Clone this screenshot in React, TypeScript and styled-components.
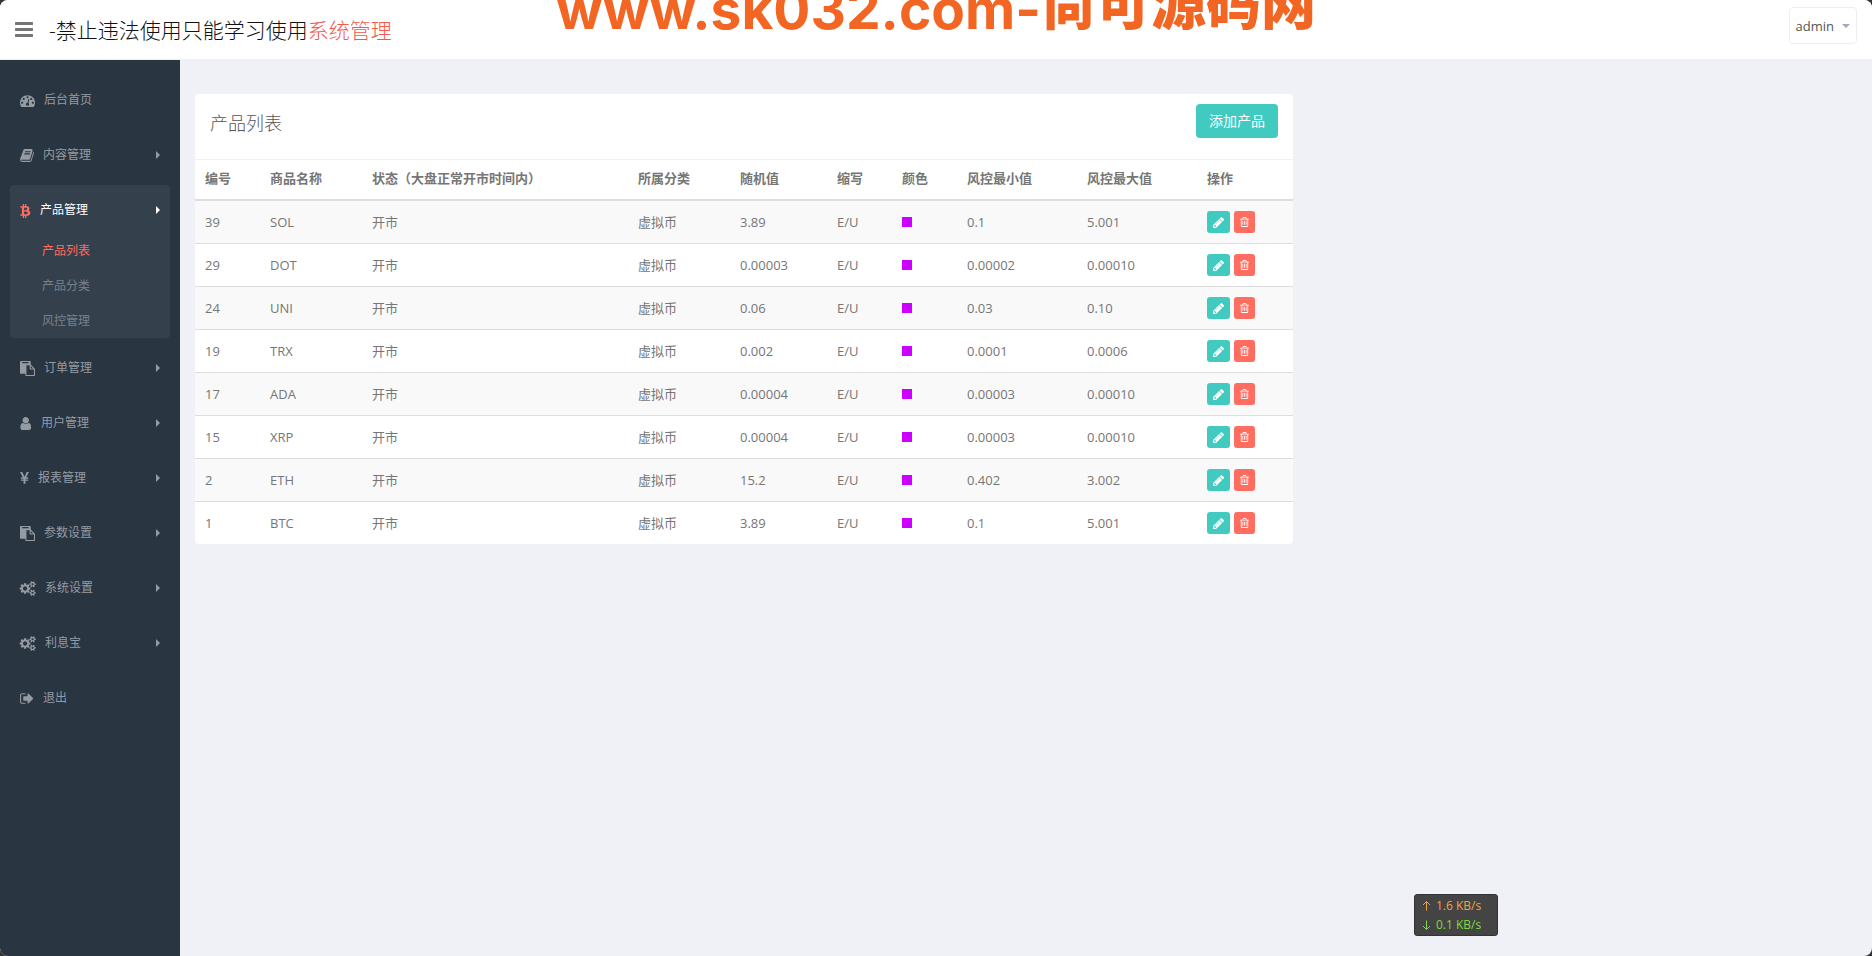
import React from 'react';
import styled, { createGlobalStyle, css } from 'styled-components';

const Global = createGlobalStyle`
  *, *::before, *::after { box-sizing: border-box; }
  html { background: #333; }
  body {
    margin: 0;
    color: #767676;
    font: 400 13px/20px "Open Sans", "Noto Sans CJK SC", sans-serif;
  }
  button { font: inherit; cursor: pointer; border: 0; padding: 0; }
  a { color: inherit; text-decoration: none; }
  ul { list-style: none; margin: 0; padding: 0; }
`;

/* Icon outlines on a 1792-unit grid: [left edge, width, path] */
const glyphs = {
  bars: [128, 1536, 'M1664 1344v128q0 26-19 45t-45 19h-1408q-26 0-45-19t-19-45v-128q0-26 19-45t45-19h1408q26 0 45 19t19 45zm0-512v128q0 26-19 45t-45 19h-1408q-26 0-45-19t-19-45v-128q0-26 19-45t45-19h1408q26 0 45 19t19 45zm0-512v128q0 26-19 45t-45 19h-1408q-26 0-45-19t-19-45v-128q0-26 19-45t45-19h1408q26 0 45 19t19 45z'],
  dashboard: [0, 1792, 'M384 1152q0-53-37.5-90.5t-90.5-37.5-90.5 37.5-37.5 90.5 37.5 90.5 90.5 37.5 90.5-37.5 37.5-90.5zm192-448q0-53-37.5-90.5t-90.5-37.5-90.5 37.5-37.5 90.5 37.5 90.5 90.5 37.5 90.5-37.5 37.5-90.5zm428 481l101-382q6-26-7.5-48.5t-38.5-29.5-48 6.5-30 39.5l-101 382q-60 5-107 43.5t-63 98.5q-20 77 20 146t117 89 146-20 89-117q16-60-6-117t-72-91zm660-33q0-53-37.5-90.5t-90.5-37.5-90.5 37.5-37.5 90.5 37.5 90.5 90.5 37.5 90.5-37.5 37.5-90.5zm-640-640q0-53-37.5-90.5t-90.5-37.5-90.5 37.5-37.5 90.5 37.5 90.5 90.5 37.5 90.5-37.5 37.5-90.5zm448 192q0-53-37.5-90.5t-90.5-37.5-90.5 37.5-37.5 90.5 37.5 90.5 90.5 37.5 90.5-37.5 37.5-90.5zm320 448q0 261-141 483-19 29-54 29h-1402q-35 0-54-29-141-221-141-483 0-182 71-348t191-286 286-191 348-71 348 71 286 191 191 286 71 348z'],
  book: [64, 1664, 'M1703 478q40 57 18 129l-275 906q-19 64-76.5 107.5t-122.5 43.5h-923q-77 0-148.5-53.5t-99.5-131.5q-24-67-2-127 0-4 3-27t4-37q1-8-3-21.5t-3-19.5q2-11 8-21t16.5-23.5 16.5-23.5q23-38 45-91.5t30-91.5q3-10 .5-30t-.5-28q3-11 17-28t17-23q21-36 42-92t25-90q1-9-2.5-32t.5-28q4-13 22-30.5t22-22.5q19-26 42.5-84.5t27.5-96.5q1-8-3-25.5t-2-26.5q2-8 9-18t18-23 17-21q8-12 16.5-30.5t15-35 16-36 19.5-32 26.5-23.5 36-11.5 47.5 5.5l-1 3q38-9 51-9h761q74 0 114 56t18 130l-274 906q-36 119-71.5 153.5t-128.5 34.5h-869q-27 0-38 15-11 16-1 43 24 70 144 70h923q29 0 56-15.5t35-41.5l300-987q7-22 5-57 38 15 59 43zm-1064 2q-4 13 2 22.5t20 9.5h608q13 0 25.5-9.5t16.5-22.5l21-64q4-13-2-22.5t-20-9.5h-608q-13 0-25.5 9.5t-16.5 22.5zm-83 256q-4 13 2 22.5t20 9.5h608q13 0 25.5-9.5t16.5-22.5l21-64q4-13-2-22.5t-20-9.5h-608q-13 0-25.5 9.5t-16.5 22.5z'],
  bitcoin: [57, 1260, 'M1167.5 640q18 182-131 258 117 28 175 103t45 214q-7 71-32.5 125t-64.5 89-97 58.5-121.5 34.5-145.5 15v255h-154v-251q-80 0-122-1v252h-154v-255q-18 0-54-.5t-55-.5h-200l31-183h111q50 0 58-51v-402h16q-6-1-16-1v-287q-13-68-89-68h-111v-164l212 1q64 0 97-1v-252h154v247q82-2 122-2v-245h154v252q79 7 140 22.5t113 45 82.5 78 36.5 114.5zm-215 545q0-36-15-64t-37-46-57.5-30.5-65.5-18.5-74-9-69-3-64.5 1-47.5 1v338q8 0 37 .5t48 .5 53-1.5 58.5-4 57-8.5 55.5-14 47.5-21 39.5-30 24.5-40 9.5-51zm-71-476q0-33-12.5-58.5t-30.5-42-48-28-55-16.5-61.5-8-58-2.5-54 1-39.5.5v307q5 0 34.5.5t46.5 0 50-2 55-5.5 51.5-11 48.5-18.5 37-27 27-38.5 9-51z'],
  paste: [0, 1792, 'M768 1664h896v-640h-416q-40 0-68-28t-28-68v-416h-384v1152zm256-1440v-64q0-13-9.5-22.5t-22.5-9.5h-704q-13 0-22.5 9.5t-9.5 22.5v64q0 13 9.5 22.5t22.5 9.5h704q13 0 22.5-9.5t9.5-22.5zm256 672h299l-299-299v299zm512 128v672q0 40-28 68t-68 28h-960q-40 0-68-28t-28-68v-160h-544q-40 0-68-28t-28-68v-1344q0-40 28-68t68-28h1088q40 0 68 28t28 68v328q21 13 36 28l408 408q28 28 48 76t20 88z'],
  user: [224, 1408, 'M1536 1399q0 109-62.5 187t-150.5 78h-854q-88 0-150.5-78t-62.5-187q0-85 8.5-160.5t31.5-152 58.5-131 94-89 134.5-34.5q131 128 313 128t313-128q76 0 134.5 34.5t94 89 58.5 131 31.5 152 8.5 160.5zm-256-887q0 159-112.5 271.5t-271.5 112.5-271.5-112.5-112.5-271.5 112.5-271.5 271.5-112.5 271.5 112.5 112.5 271.5z'],
  yen: [384, 1027, 'M985.5 1536h-172q-13 0-22.5-9t-9.5-23v-330h-288q-13 0-22.5-9t-9.5-23v-103q0-13 9.5-22.5t22.5-9.5h288v-85h-288q-13 0-22.5-9t-9.5-23v-104q0-13 9.5-22.5t22.5-9.5h214l-321-578q-8-16 0-32 10-16 28-16h194q19 0 29 18l215 425q19 38 56 125 10-24 30.5-68t27.5-61l191-420q8-19 29-19h191q17 0 27 16 9 14 1 31l-313 579h215q13 0 22.5 9.5t9.5 22.5v104q0 14-9.5 23t-22.5 9h-290v85h290q13 0 22.5 9.5t9.5 22.5v103q0 14-9.5 23t-22.5 9h-290v330q0 13-9.5 22.5t-22.5 9.5z'],
  cogs: [0, 1856, 'M832 896q0-106-75-181t-181-75-181 75-75 181 75 181 181 75 181-75 75-181zm768 512q0-52-38-90t-90-38-90 38-38 90q0 53 37.5 90.5t90.5 37.5 90.5-37.5 37.5-90.5zm0-1024q0-52-38-90t-90-38-90 38-38 90q0 53 37.5 90.5t90.5 37.5 90.5-37.5 37.5-90.5zm-384 421v185q0 10-7 19.5t-16 10.5l-155 24q-11 35-32 76 34 48 90 115 7 11 7 20 0 12-7 19-23 30-82.5 89.5t-78.5 59.5q-11 0-21-7l-115-90q-37 19-77 31-11 108-23 155-7 24-30 24h-186q-11 0-20-7.5t-10-17.5l-23-153q-34-10-75-31l-118 89q-7 7-20 7-11 0-21-8-144-133-144-160 0-9 7-19 10-14 41-53t47-61q-23-44-35-82l-152-24q-10-1-17-9.5t-7-19.5v-185q0-10 7-19.5t16-10.5l155-24q11-35 32-76-34-48-90-115-7-11-7-20 0-12 7-20 22-30 82-89t79-59q11 0 21 7l115 90q34-18 77-32 11-108 23-154 7-24 30-24h186q11 0 20 7.5t10 17.5l23 153q34 10 75 31l118-89q8-7 20-7 11 0 21 8 144 133 144 160 0 8-7 19-12 16-42 54t-45 60q23 48 34 82l152 23q10 2 17 10.5t7 19.5zm640 533v140q0 16-149 31-12 27-30 52 51 113 51 138 0 4-4 7-122 71-124 71-8 0-46-47t-52-68q-20 2-30 2t-30-2q-14 21-52 68t-46 47q-2 0-124-71-4-3-4-7 0-25 51-138-18-25-30-52-149-15-149-31v-140q0-16 149-31 13-29 30-52-51-113-51-138 0-4 4-7 4-2 35-20t59-34 30-16q8 0 46 46.5t52 67.5q20-2 30-2t30 2q51-71 92-112l6-2q4 0 124 70 4 3 4 7 0 25-51 138 17 23 30 52 149 15 149 31zm0-1024v140q0 16-149 31-12 27-30 52 51 113 51 138 0 4-4 7-122 71-124 71-8 0-46-47t-52-68q-20 2-30 2t-30-2q-14 21-52 68t-46 47q-2 0-124-71-4-3-4-7 0-25 51-138-18-25-30-52-149-15-149-31v-140q0-16 149-31 13-29 30-52-51-113-51-138 0-4 4-7 4-2 35-20t59-34 30-16q8 0 46 46.5t52 67.5q20-2 30-2t30 2q51-71 92-112l6-2q4 0 124 70 4 3 4 7 0 25-51 138 17 23 30 52 149 15 149 31z'],
  signOut: [64, 1664, 'M704 1440q0 4 1 20t.5 26.5-3 23.5-10 19.5-20.5 6.5h-320q-119 0-203.5-84.5t-84.5-203.5v-704q0-119 84.5-203.5t203.5-84.5h320q13 0 22.5 9.5t9.5 22.5q0 4 1 20t.5 26.5-3 23.5-10 19.5-20.5 6.5h-320q-66 0-113 47t-47 113v704q0 66 47 113t113 47h312l11.5 1 11.5 3 8 5.5 7 9 2 13.5zm928-544q0 26-19 45l-544 544q-19 19-45 19t-45-19-19-45v-288h-448q-26 0-45-19t-19-45v-384q0-26 19-45t45-19h448v-288q0-26 19-45t45-19 45 19l544 544q19 19 19 45z'],
  pencil: [256, 1387, 'M491 1536l91-91-235-235-91 91v107h128v128h107zm523-928q0-22-22-22-10 0-17 7l-542 542q-7 7-7 17 0 22 22 22 10 0 17-7l542-542q7-7 7-17zm-54-192l416 416-832 832h-416v-416zm683 96q0 53-37 90l-166 166-416-416 166-165q36-38 90-38 53 0 91 38l235 234q37 39 37 91z'],
  trash: [192, 1408, 'M704 736v576q0 14-9 23t-23 9h-64q-14 0-23-9t-9-23v-576q0-14 9-23t23-9h64q14 0 23 9t9 23zm256 0v576q0 14-9 23t-23 9h-64q-14 0-23-9t-9-23v-576q0-14 9-23t23-9h64q14 0 23 9t9 23zm256 0v576q0 14-9 23t-23 9h-64q-14 0-23-9t-9-23v-576q0-14 9-23t23-9h64q14 0 23 9t9 23zm128 724v-948h-896v948q0 22 7 40.5t14.5 27 10.5 8.5h832q3 0 10.5-8.5t14.5-27 7-40.5zm-672-1076h448l-48-117q-7-9-17-11h-317q-10 2-17 11zm928 32v64q0 14-9 23t-23 9h-96v948q0 83-47 143.5t-113 60.5h-832q-66 0-113-58.5t-47-141.5v-952h-96q-14 0-23-9t-9-23v-64q0-14 9-23t23-9h309l70-167q15-37 54-63t79-26h320q40 0 79 26t54 63l70 167h309q14 0 23 9t9 23z'],
} as const;

type GlyphName = keyof typeof glyphs;

function Glyph({ name, size }: { name: GlyphName; size: number }) {
  const [left, width, d] = glyphs[name];
  return (
    <svg
      viewBox={`${left} 0 ${width} 1792`}
      width={Math.round((width / 1792) * size)}
      height={size}
      fill="currentColor"
      overflow="visible"
      aria-hidden="true"
    >
      <path d={d} />
    </svg>
  );
}

const Page = styled.div`
  position: relative;
  min-height: 100vh;
  display: flex;
  flex-direction: column;
  overflow: hidden;
  border-radius: 8px;
  background: #f0f1f7;
`;

const Header = styled.header`
  height: 60px;
  flex: none;
  display: flex;
  align-items: center;
  padding: 0 15px;
  background: #fff;
  border-bottom: 1px solid #f0f0f3;
`;

const MenuToggle = styled.button`
  display: flex;
  background: none;
  color: #757575;
`;

const Brand = styled.a`
  margin-left: 16px;
  font-size: 21px;
  line-height: 30px;
  font-weight: 300;
  color: #111;
  span { color: #f4574b; }
`;

const UserButton = styled.button`
  margin: 0 0 8px auto;
  height: 37px;
  padding: 0 6px;
  display: flex;
  align-items: center;
  gap: 8px;
  background: #fff;
  border: 1px solid #edeef3;
  border-radius: 4px;
  color: #555;
  &::after {
    content: '';
    border: 4px solid transparent;
    border-top-color: #a4aabb;
    border-bottom: 0;
  }
`;

const Banner = styled.div`
  position: absolute;
  top: 0;
  left: 0;
  right: 0;
  height: 30px;
  display: flex;
  justify-content: center;
  align-items: flex-end;
  pointer-events: none;
  color: #f26522;
  font: 700 55px/42px "Inter", "Noto Sans CJK SC", sans-serif;
  white-space: nowrap;
  b { font-weight: 900; line-height: 52px; }
`;

const Body = styled.div`
  flex: 1;
  display: flex;
`;

const Sidebar = styled.nav`
  width: 180px;
  flex: none;
  padding: 15px 10px;
  background: #2a3542;
  font-size: 12px;
`;

const Group = styled.li<{ $open?: boolean }>`
  margin-bottom: 5px;
  border-radius: 4px;
  ${p => p.$open && css`background: #35404d;`}
`;

const Item = styled.a<{ $active?: boolean }>`
  height: 50px;
  padding: 0 10px;
  display: flex;
  align-items: center;
  gap: 9px;
  color: ${p => (p.$active ? '#fff' : '#949ba2')};
  svg { color: ${p => (p.$active ? '#ff6c60' : 'inherit')}; }
`;

const Arrow = styled.i`
  margin-left: auto;
  border: 4px solid transparent;
  border-left-color: currentColor;
  border-right: 0;
`;

const SubList = styled.ul`
  margin-top: -2px;
`;

const SubItem = styled.a<{ $active?: boolean }>`
  display: block;
  padding-left: 32px;
  line-height: 35px;
  color: ${p => (p.$active ? '#ff6c60' : '#77818a')};
`;

const Main = styled.main`
  flex: 1;
  padding: 34px 15px;
`;

const Card = styled.section`
  width: calc(66.6667% - 10px);
  background: #fff;
  border-radius: 4px;
  overflow: hidden;
`;

const CardHead = styled.header`
  height: 66px;
  padding: 10px 15px;
  display: flex;
  justify-content: space-between;
  border-bottom: 1px solid #eff1f4;
  h1 { margin: 0; font-size: 18px; line-height: 38px; font-weight: 300; color: #555; }
`;

const AddButton = styled.button`
  height: 34px;
  padding: 0 13px;
  border-radius: 4px;
  background: #41cac0;
  color: #fff;
  font-size: 14px;
`;

const Table = styled.table`
  width: 100%;
  table-layout: fixed;
  border-collapse: separate;
  border-spacing: 0;
  th { height: 41px; padding: 0 10px 3px; text-align: left; border-bottom: 2px solid #ddd; font-weight: 700; }
  td { height: 43px; padding: 0 10px; border-bottom: 1px solid #ddd; }
  tr:last-child td { height: 42px; border-bottom: 0; }
  tbody tr:nth-child(odd) { background: #f9f9f9; }
`;

const Swatch = styled.span`
  display: block;
  width: 10px;
  height: 10px;
  background: #c0f;
`;

const Actions = styled.div`
  display: flex;
  gap: 4px;
`;

const IconButton = styled.button<{ $danger?: boolean }>`
  width: ${p => (p.$danger ? 21 : 23)}px;
  height: 22px;
  display: flex;
  align-items: center;
  justify-content: center;
  border-radius: 3px;
  color: #fff;
  background: ${p => (p.$danger ? '#ff6c60' : '#41cac0')};
`;

const NetMeter = styled.aside`
  position: fixed;
  right: 374px;
  bottom: 20px;
  width: 84px;
  padding: 1px 7px;
  border: 1px solid #333;
  border-radius: 3px;
  background: #444;
  line-height: 19px;
  font-size: 12px;
`;

const Rate = styled.div<{ $color: string }>`
  display: flex;
  align-items: center;
  gap: 5px;
  color: ${p => p.$color};
`;

function RateArrow({ down }: { down?: boolean }) {
  return (
    <svg width="9" height="10" viewBox="0 0 9 10" fill="none" stroke="currentColor" aria-hidden="true">
      <path d={down ? 'M4.5 0.5v9M1 6l3.5 3.5L8 6' : 'M4.5 9.5v-9M1 4l3.5-3.5L8 4'} />
    </svg>
  );
}

const menu: { icon: GlyphName; label: string; leaf?: boolean; children?: string[] }[] = [
  { icon: 'dashboard', label: '后台首页', leaf: true },
  { icon: 'book', label: '内容管理' },
  { icon: 'bitcoin', label: '产品管理', children: ['产品列表', '产品分类', '风控管理'] },
  { icon: 'paste', label: '订单管理' },
  { icon: 'user', label: '用户管理' },
  { icon: 'yen', label: '报表管理' },
  { icon: 'paste', label: '参数设置' },
  { icon: 'cogs', label: '系统设置' },
  { icon: 'cogs', label: '利息宝' },
  { icon: 'signOut', label: '退出', leaf: true },
];

const columns: [string, number][] = [
  ['编号', 65], ['商品名称', 102], ['状态（大盘正常开市时间内）', 266], ['所属分类', 102],
  ['随机值', 97], ['缩写', 65], ['颜色', 65], ['风控最小值', 120], ['风控最大值', 120], ['操作', 96],
];

const rows = [
  ['39', 'SOL', '3.89', '0.1', '5.001'],
  ['29', 'DOT', '0.00003', '0.00002', '0.00010'],
  ['24', 'UNI', '0.06', '0.03', '0.10'],
  ['19', 'TRX', '0.002', '0.0001', '0.0006'],
  ['17', 'ADA', '0.00004', '0.00003', '0.00010'],
  ['15', 'XRP', '0.00004', '0.00003', '0.00010'],
  ['2', 'ETH', '15.2', '0.402', '3.002'],
  ['1', 'BTC', '3.89', '0.1', '5.001'],
];

export default function App() {
  return (
    <Page>
      <Global />
      <Header>
        <MenuToggle aria-label="菜单"><Glyph name="bars" size={21} /></MenuToggle>
        <Brand href="#">-禁止违法使用只能学习使用<span>系统管理</span></Brand>
        <UserButton>admin</UserButton>
      </Header>
      <Banner>www.sk032.com-<b>尚可源码网</b></Banner>
      <Body>
        <Sidebar>
          <ul>
            {menu.map(({ icon, label, leaf, children }) => (
              <Group key={label} $open={!!children}>
                <Item href="#" $active={!!children}>
                  <Glyph name={icon} size={15} />
                  {label}
                  {!leaf && <Arrow />}
                </Item>
                {children && (
                  <SubList>
                    {children.map((child, i) => (
                      <li key={child}><SubItem href="#" $active={i === 0}>{child}</SubItem></li>
                    ))}
                  </SubList>
                )}
              </Group>
            ))}
          </ul>
        </Sidebar>
        <Main>
          <Card>
            <CardHead><h1>产品列表</h1><AddButton>添加产品</AddButton></CardHead>
            <Table>
              <colgroup>{columns.map(([n, w]) => <col key={n} width={w} />)}</colgroup>
              <thead><tr>{columns.map(([n]) => <th key={n} scope="col">{n}</th>)}</tr></thead>
              <tbody>
                {rows.map(([id, name, random, min, max]) => (
                  <tr key={id}>
                    <td>{id}</td>
                    <td>{name}</td>
                    <td>开市</td>
                    <td>虚拟币</td>
                    <td>{random}</td>
                    <td>E/U</td>
                    <td><Swatch /></td>
                    <td>{min}</td>
                    <td>{max}</td>
                    <td>
                      <Actions>
                        <IconButton aria-label="编辑"><Glyph name="pencil" size={13} /></IconButton>
                        <IconButton $danger aria-label="删除"><Glyph name="trash" size={12} /></IconButton>
                      </Actions>
                    </td>
                  </tr>
                ))}
              </tbody>
            </Table>
          </Card>
        </Main>
      </Body>
      <NetMeter>
        <Rate $color="#f0a33c"><RateArrow />1.6 KB/s</Rate>
        <Rate $color="#7ddb3c"><RateArrow down />0.1 KB/s</Rate>
      </NetMeter>
    </Page>
  );
}
